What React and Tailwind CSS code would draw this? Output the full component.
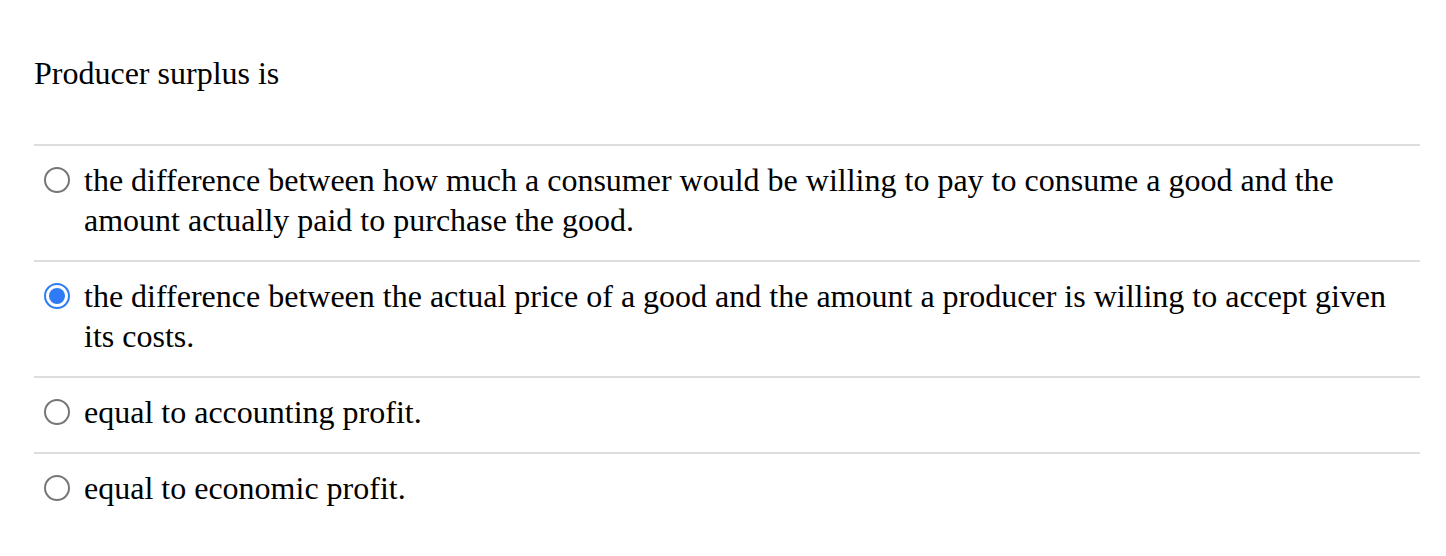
import React from "react";

const options = [
  {
    text: "the difference between how much a consumer would be willing to pay to consume a good and the amount actually paid to purchase the good.",
    checked: false,
  },
  {
    text: "the difference between the actual price of a good and the amount a producer is willing to accept given its costs.",
    checked: true,
  },
  { text: "equal to accounting profit.", checked: false },
  { text: "equal to economic profit.", checked: false },
];

function Radio({ checked }) {
  if (checked) {
    return (
      <span className="mt-[7px] flex h-[26px] w-[26px] shrink-0 items-center justify-center rounded-full border-[2px] border-[#2f7bf5] bg-white">
        <span className="h-[16px] w-[16px] rounded-full bg-[#2f7bf5]" />
      </span>
    );
  }
  return (
    <span className="mt-[7px] block h-[26px] w-[26px] shrink-0 rounded-full border-[2px] border-[#767676] bg-white" />
  );
}

export default function App() {
  return (
    <div
      className="min-h-[556px] bg-white pl-[34px] pr-[26px] pt-[53px] text-[32px] leading-[40px] text-black"
      style={{ fontFamily: '"Liberation Serif", "Times New Roman", serif' }}
    >
      <p className="mb-[51px]">Producer surplus is</p>
      <div>
        {options.map((o, i) => (
          <div
            key={i}
            className="flex items-start gap-[14px] border-t-[2px] border-[#dddddd] pb-[20px] pl-[10px] pt-[14px]"
          >
            <Radio checked={o.checked} />
            <span>{o.text}</span>
          </div>
        ))}
      </div>
    </div>
  );
}
